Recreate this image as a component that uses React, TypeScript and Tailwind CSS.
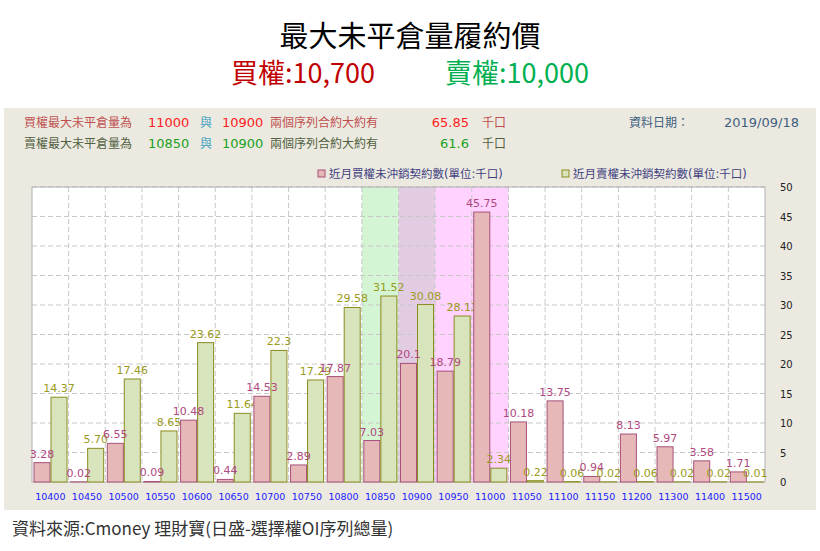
import React from "react";

const strikes = ["10400","10450","10500","10550","10600","10650","10700","10750","10800","10850","10900","10950","11000","11050","11100","11150","11200","11300","11400","11500"];
const calls = [3.28,0.02,6.55,0.09,10.48,0.44,14.53,2.89,17.87,7.03,20.1,18.79,45.75,10.18,13.75,0.94,8.13,5.97,3.58,1.71];
const puts = [14.37,5.7,17.46,8.65,23.62,11.64,22.3,17.29,29.58,31.52,30.08,28.13,2.34,0.22,0.06,0.02,0.06,0.02,0.02,0.01];
const putLbl = ["14.37","5.70","17.46","8.65","23.62","11.64","22.3","17.29","29.58","31.52","30.08","28.13","2.34","0.22","0.06","0.02","0.06","0.02","0.02","0.01"];

const X0 = 32, W = 36.65, Y0 = 481, K = 5.9, TOP = 186, R = X0 + W * 20;

function Chart() {
  return (
    <svg viewBox="4 160 812 350" width="812" height="350" className="block" style={{ fontFamily: "'DejaVu Sans', 'Noto Sans CJK TC', sans-serif" }}>
      <rect x={X0} y={TOP} width={R - X0} height={Y0 - TOP} fill="#fff" />
      <rect x={X0 + W * 9} y={TOP} width={W} height={Y0 - TOP} fill="#d4f5d4" />
      <rect x={X0 + W * 10} y={TOP} width={W} height={Y0 - TOP} fill="#e2cce2" />
      <rect x={X0 + W * 11} y={TOP} width={W * 2} height={Y0 - TOP} fill="#ffd2ff" />
      {Array.from({ length: 10 }, (_, i) => (
        <line key={"h" + i} x1={X0} x2={R} y1={TOP + i * 5 * K} y2={TOP + i * 5 * K} stroke="#c8c8c8" strokeDasharray="5 3" />
      ))}
      {Array.from({ length: 19 }, (_, i) => (
        <line key={"v" + i} x1={X0 + (i + 1) * W} x2={X0 + (i + 1) * W} y1={TOP} y2={Y0} stroke="#c8c8c8" strokeDasharray="5 3" />
      ))}
      <rect x={X0} y={TOP} width={R - X0} height={Y0 - TOP} fill="none" stroke="#b0b0b0" />
      {strikes.map((s, i) => {
        const c = X0 + i * W;
        const ch = calls[i] * K, ph = puts[i] * K;
        return (
          <g key={s}>
            <rect x={c + 2} y={Y0 - ch} width={16} height={ch} fill="#e6b8b8" stroke="#a8507a" />
            <rect x={c + 19} y={Y0 - ph} width={16} height={ph} fill="#d8e4bc" stroke="#8c8c20" />
            <text x={c + 10} y={Y0 - ch - 5} fontSize="11" fill="#b04880" textAnchor="middle">{calls[i]}</text>
            <text x={c + 27} y={Y0 - ph - 5} fontSize="11" fill="#9a9a20" textAnchor="middle">{putLbl[i]}</text>
            <text x={c + W / 2} y={499} fontSize="9.5" fill="#2020ff" textAnchor="middle">{s}</text>
          </g>
        );
      })}
      {Array.from({ length: 11 }, (_, i) => (
        <text key={"y" + i} x={780} y={Y0 - i * 5 * K + 4} fontSize="10" fill="#222">{i * 5}</text>
      ))}
      <rect x={318} y={169} width={7} height={7} fill="#e6b8b8" stroke="#a8507a" />
      <text x={329} y={177} fontSize="11.5" fill="#404080">近月買權未沖銷契約數(單位:千口)</text>
      <rect x={562} y={169} width={7} height={7} fill="#d8e4bc" stroke="#8c8c20" />
      <text x={573} y={177} fontSize="11.5" fill="#404080">近月賣權未沖銷契約數(單位:千口)</text>
    </svg>
  );
}

export default function App() {
  return (
    <div className="w-[820px] h-[551px] bg-white overflow-hidden" style={{ fontFamily: "'Noto Sans CJK TC', 'DejaVu Sans', sans-serif" }}>
      <div className="text-center text-[29px] leading-[36px] pt-[16px] text-black">最大未平倉量履約價</div>
      <div className="flex justify-center gap-[70px] text-[27px] leading-[36px] mt-[2px]">
        <span className="text-[#c00000]">買權:10,700</span>
        <span className="text-[#00b050]">賣權:10,000</span>
      </div>
      <div className="mx-[4px] mt-[18px] h-[402px] bg-[#eceae0] text-[12px]" style={{ fontFamily: "'DejaVu Sans', 'Noto Sans CJK TC', sans-serif" }}>
        <div className="pt-[7px] pl-[20px] flex flex-col gap-[5px] leading-[16px]">
          <div className="flex">
            <span className="w-[124px] text-[#c05050]">買權最大未平倉量為</span>
            <span className="w-[52px] text-[#ff2020] text-[13px]">11000</span>
            <span className="w-[22px] text-[#40a0c0]">與</span>
            <span className="w-[48px] text-[#ff2020] text-[13px]">10900</span>
            <span className="w-[160px] text-[#c05050]">兩個序列合約大約有</span>
            <span className="w-[39px] text-right text-[#ff2020] text-[13px]">65.85</span>
            <span className="w-[160px] pl-[13px] text-[#c05050]">千口</span>
            <span className="w-[95px] text-[#406080]">資料日期：</span>
            <span className="text-[#406080] text-[13px]">2019/09/18</span>
          </div>
          <div className="flex">
            <span className="w-[124px] text-[#506040]">賣權最大未平倉量為</span>
            <span className="w-[52px] text-[#20a020] text-[13px]">10850</span>
            <span className="w-[22px] text-[#40a0c0]">與</span>
            <span className="w-[48px] text-[#20a020] text-[13px]">10900</span>
            <span className="w-[160px] text-[#506040]">兩個序列合約大約有</span>
            <span className="w-[39px] text-right text-[#20a020] text-[13px]">61.6</span>
            <span className="pl-[13px] text-[#506040]">千口</span>
          </div>
        </div>
        <div className="mt-[9px]"><Chart /></div>
      </div>
      <div className="pl-[12px] pt-[5px] text-[17px] text-[#333]">資料來源:Cmoney 理財寶(日盛-選擇權OI序列總量)</div>
    </div>
  );
}
